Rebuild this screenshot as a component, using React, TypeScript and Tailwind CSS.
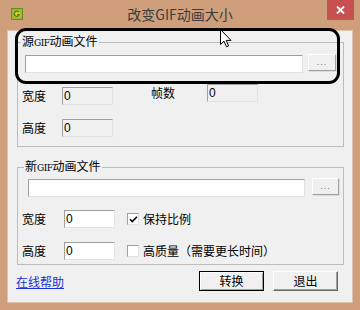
import React from "react";

const cjk = "font-['Noto_Sans_CJK_SC','Noto_Sans',sans-serif]";

// sunken edit box, classic style
function Edit({ w, value, disabled }: { w: string; value?: string; disabled?: boolean }) {
  return (
    <div
      className={`${w} h-[18px] border border-t-[#a0a0a0] border-l-[#a0a0a0] border-r-[#e3e3e3] border-b-[#e3e3e3] ${
        disabled ? "bg-[#f0f0f0]" : "bg-white"
      } pl-[1px] text-[12px] leading-[16px] text-black font-['Liberation_Sans',sans-serif]`}
    >
      {value}
    </div>
  );
}

function DotsButton({ w }: { w: string }) {
  return (
    <div
      className={`${w} h-[17px] flex items-center justify-center border border-t-white border-l-white border-r-[#a0a0a0] border-b-[#a0a0a0] bg-[#f0f0f0] shadow-[1px_1px_0_#dcdcdc] text-[9px] tracking-[1px] text-[#707070] font-['Liberation_Sans',sans-serif]`}
    >
      ...
    </div>
  );
}

function Check({ checked }: { checked?: boolean }) {
  return (
    <div className="w-[12px] h-[12px] border border-t-[#a0a0a0] border-l-[#a0a0a0] border-r-[#e3e3e3] border-b-[#e3e3e3] bg-white flex items-center justify-center">
      {checked && (
        <svg width="9" height="9" viewBox="0 0 9 9">
          <path d="M1 4.2 L3.3 6.6 L8 1.8" fill="none" stroke="#000" strokeWidth="1.6" />
        </svg>
      )}
    </div>
  );
}

function Legend({ text, ml }: { text: [string, string]; ml: string }) {
  return (
    <legend className={`${ml} px-[1px] text-[12px] leading-[14px] text-black ${cjk}`}>
      {text[0]}
      <span className="text-[9px] font-['DejaVu_Serif',serif] tracking-[-0.5px]">GIF</span>
      {text[1]}
    </legend>
  );
}

export default function App() {
  return (
    <div className="relative w-[360px] h-[310px] bg-[#cf9f7b] flex flex-col overflow-hidden">
      {/* title bar */}
      <div className="h-[30px] grid grid-cols-[33px_1fr_33px] shrink-0">
        <div className="pt-[8px] pl-[11px]">
          <svg width="12" height="12" viewBox="0 0 12 12">
            <rect x="0.5" y="0.5" width="11" height="11" fill="#9cb43a" stroke="#6e8a1c" />
            <circle cx="6" cy="6" r="3.6" fill="#d9d21c" />
            <path d="M7.8 4.2 A2.6 2.6 0 1 0 8.2 6.6 L6.3 6.6" fill="none" stroke="#4d7a12" strokeWidth="1.3" />
          </svg>
        </div>
        <div className={`text-center text-[14px] leading-[28px] text-[#3c3c3c] ${cjk}`}>改变GIF动画大小</div>
        <div className="flex justify-end pr-[6px]">
          <div className="w-[27px] h-[20px] bg-[#c75050] flex items-center justify-center">
            <svg width="9" height="8" viewBox="0 0 9 8">
              <path d="M1 0.5 L8 7.5 M8 0.5 L1 7.5" stroke="#fff" strokeWidth="1.8" />
            </svg>
          </div>
        </div>
      </div>

      {/* client area */}
      <div className="mx-[7px] mb-[7px] flex-1 border border-[#dcc3ad] bg-[#f0f0f0] flex flex-col">
        <fieldset className="mt-[3px] ml-[9px] w-[327px] border border-[#bcbcbc] pb-[9px]">
          <Legend text={["源", "动画文件"]} ml="ml-[3px]" />
          <div className="mt-[5px] ml-[7px] flex items-start">
            <Edit w="w-[278px]" />
            <div className="ml-[5px] -mt-[1px]">
              <DotsButton w="w-[28px]" />
            </div>
          </div>
          <div className={`mt-[11px] pl-[4px] flex items-start text-[12px] text-black ${cjk}`}>
            <div className="mt-[3px] flex items-center">
              <span className="w-[40px]">宽度</span>
              <Edit w="w-[51px]" value="0" disabled />
            </div>
            <div className="ml-[38px] flex items-center">
              <span className="w-[56px]">帧数</span>
              <Edit w="w-[51px]" value="0" disabled />
            </div>
          </div>
          <div className={`mt-[14px] pl-[4px] flex items-center text-[12px] text-black ${cjk}`}>
            <span className="w-[40px]">高度</span>
            <Edit w="w-[51px]" value="0" disabled />
          </div>
        </fieldset>

        <fieldset className="mt-[12px] ml-[9px] w-[327px] border border-[#bcbcbc] pb-[4px]">
          <Legend text={["新", "动画文件"]} ml="ml-[6px]" />
          <div className="mt-[4px] ml-[10px] flex items-start">
            <Edit w="w-[277px]" />
            <div className="ml-[7px] -mt-[1px]">
              <DotsButton w="w-[27px]" />
            </div>
          </div>
          <div className={`mt-[13px] pl-[4px] flex items-center text-[12px] text-black ${cjk}`}>
            <span className="w-[42px]">宽度</span>
            <Edit w="w-[51px]" value="0" />
            <div className="ml-[12px]">
              <Check checked />
            </div>
            <span className="ml-[4px]">保持比例</span>
          </div>
          <div className={`mt-[14px] pl-[4px] flex items-center text-[12px] text-black ${cjk}`}>
            <span className="w-[42px]">高度</span>
            <Edit w="w-[51px]" value="0" />
            <div className="ml-[12px]">
              <Check />
            </div>
            <span className="ml-[4px]">高质量（需要更长时间）</span>
          </div>
        </fieldset>

        <div className={`mt-[6px] flex items-start text-[12px] ${cjk}`}>
          <a className="ml-[8px] mt-[4px] text-[#1a2fd6] underline leading-[14px]">在线帮助</a>
          <button className="ml-auto w-[65px] h-[20px] border border-black bg-[#f0f0f0] shadow-[inset_1px_1px_0_#fff,inset_-1px_-1px_0_#a0a0a0] text-black leading-[16px]">
            转换
          </button>
          <button className="ml-[9px] mr-[14px] w-[65px] h-[20px] border border-t-white border-l-white border-r-[#696969] border-b-[#696969] bg-[#f0f0f0] shadow-[inset_-1px_-1px_0_#a0a0a0] text-black leading-[16px]">
            退出
          </button>
        </div>
      </div>

      {/* annotation drawn over the first group */}
      <div className="absolute left-[15px] top-[28px] w-[325px] h-[56px] border-[3px] border-black rounded-[11px] pointer-events-none" />

      {/* mouse pointer */}
      <svg className="absolute left-[220px] top-[29px]" width="12" height="19" viewBox="0 0 12 19">
        <path d="M0.5 0.5 L0.5 15.5 L4 12.2 L6.5 17.8 L8.6 16.9 L6.2 11.4 L11 11.4 Z" fill="#fff" stroke="#000" strokeWidth="1" />
      </svg>
    </div>
  );
}
